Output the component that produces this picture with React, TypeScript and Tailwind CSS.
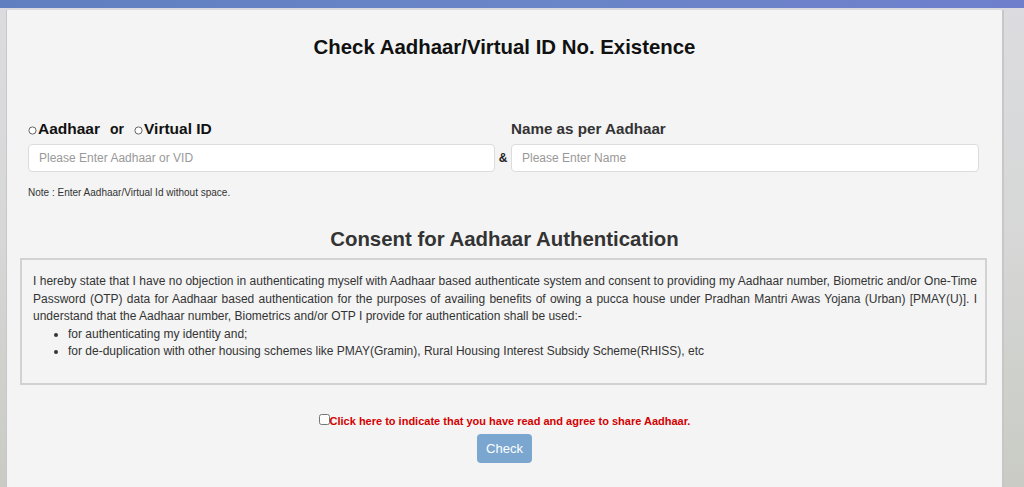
function Radio() {
  return (
    <svg width="9" height="9" viewBox="0 0 9 9" className="mb-[3px] mr-[1px] shrink-0">
      <circle cx="4.5" cy="4.5" r="3.6" fill="#fff" stroke="#555" strokeWidth="0.9" />
    </svg>
  );
}

export default function App() {
  return (
    <div
      className="w-[1024px] h-[487px] overflow-hidden flex flex-col bg-gradient-to-b from-[#dcdce0] via-[#d6d7d6] to-[#c9cbc4]"
      style={{ fontFamily: '"Liberation Sans", Arial, sans-serif' }}
    >
      <div className="h-[8px] shrink-0 bg-gradient-to-r from-[#5f7fc0] via-[#6a86c8] to-[#6f7fcc]" />
      <div className="flex flex-1 pt-[2px]">
        <div className="w-[6px] shrink-0" />
        <div className="w-[998px] shrink-0 border-l border-r-2 border-[#c8c6c8] bg-[#f4f4f4] px-[21px] text-[#333]">
          <h1 className="mt-[26px] text-center text-[20.4px] font-bold leading-[22px] text-[#111]">
            Check Aadhaar/Virtual ID No. Existence
          </h1>

          <div className="mt-[59px] grid grid-cols-[467px_16px_468px]">
            <div className="flex items-end text-[15.5px] font-bold text-[#111] leading-[18px]">
              <Radio />
              <span>Aadhaar</span>
              <span className="ml-[10px] mr-[10px] text-[14px]">or</span>
              <Radio />
              <span>Virtual ID</span>
            </div>
            <div />
            <div className="pt-[3px] text-[15.2px] font-bold leading-[18px] text-[#333]">
              Name as per Aadhaar
            </div>

            <input
              className="mt-[6px] h-[28px] rounded-[4px] border border-[#dcdcdc] bg-white px-[10px] text-[12px] placeholder:text-[#999] outline-none"
              placeholder="Please Enter Aadhaar or VID"
            />
            <div className="mt-[6px] flex items-center justify-center text-[12px] font-bold text-[#222]">&amp;</div>
            <input
              className="mt-[6px] h-[28px] rounded-[4px] border border-[#dcdcdc] bg-white px-[10px] text-[12px] placeholder:text-[#999] outline-none"
              placeholder="Please Enter Name"
            />
          </div>

          <p className="mt-[15px] text-[10px] leading-[12px] text-[#333]">
            Note : Enter Aadhaar/Virtual Id without space.
          </p>

          <h2 className="mt-[29px] text-center text-[20.4px] font-bold leading-[22px] text-[#333]">
            Consent for Aadhaar Authentication
          </h2>

          <div className="ml-[-8px] mr-[-6px] mt-[8px] h-[127px] border-2 border-[#d2d2d2] bg-[#f4f4f4] pl-[11px] pr-[8px] pt-[13px] text-[12px] leading-[17.5px] text-[#333]">
            <p className="text-justify">
              I hereby state that I have no objection in authenticating myself with Aadhaar based authenticate system and
              consent to providing my Aadhaar number, Biometric and/or One-Time Password (OTP) data for Aadhaar based
              authentication for the purposes of availing benefits of owing a pucca house under Pradhan Mantri Awas Yojana
              (Urban) [PMAY(U)]. I understand that the Aadhaar number, Biometrics and/or OTP I provide for authentication
              shall be used:-
            </p>
            <ul className="list-disc pl-[35px]">
              <li>for authenticating my identity and;</li>
              <li>for de-duplication with other housing schemes like PMAY(Gramin), Rural Housing Interest Subsidy Scheme(RHISS), etc</li>
            </ul>
          </div>

          <div className="mt-[29px] flex items-center justify-center">
            <input type="checkbox" className="m-0 mb-[3px] h-[11px] w-[11px]" />
            <span className="text-[11px] font-bold leading-[14px] text-[#d40000]">
              Click here to indicate that you have read and agree to share Aadhaar.
            </span>
          </div>
          <div className="mt-[6px] flex justify-center">
            <button className="h-[29px] w-[55px] rounded-[4px] bg-[#7aa6d0] text-[13px] text-white">Check</button>
          </div>
        </div>
      </div>
    </div>
  );
}
